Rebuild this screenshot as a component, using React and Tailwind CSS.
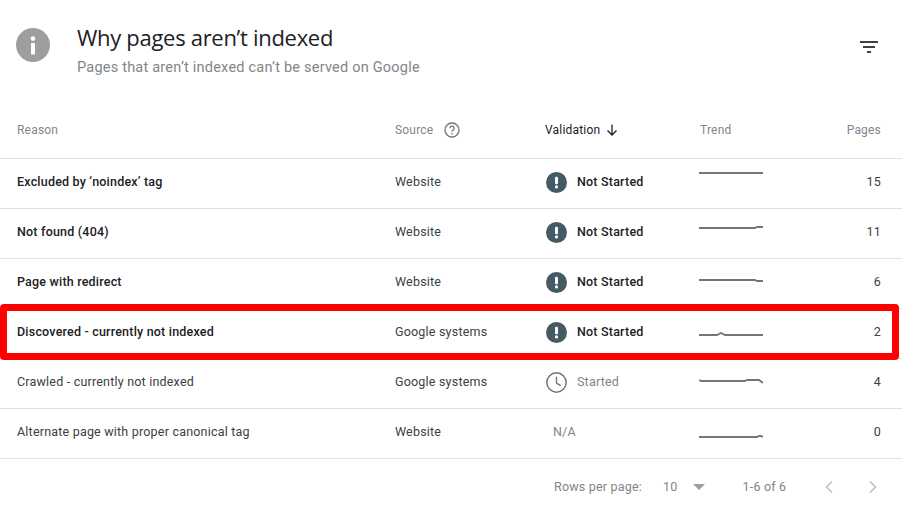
const rows = [
  { reason: "Excluded by ‘noindex’ tag", bold: true, source: "Website", status: "not", pages: "15", top: 11, d: "M0 3H64" },
  { reason: "Not found (404)", bold: true, source: "Website", status: "not", pages: "11", top: 16, d: "M0 3H56L58 2H64" },
  { reason: "Page with redirect", bold: true, source: "Website", status: "not", pages: "6", top: 18, d: "M0 3H56L58 4H64" },
  { reason: "Discovered - currently not indexed", bold: true, source: "Google systems", status: "not", pages: "2", top: 23, d: "M0 3H18L22 1L26 3H64" },
  { reason: "Crawled - currently not indexed", bold: false, source: "Google systems", status: "started", pages: "4", top: 19, d: "M0 2L2 3H46L48 2H60L64 5" },
  { reason: "Alternate page with proper canonical tag", bold: false, source: "Website", status: "na", pages: "0", top: 25, d: "M0 3H58L60 2H62L64 3" },
];

function Spark({ d, top }) {
  return (
    <div className="self-start" style={{ paddingTop: `${top}px` }}>
      <svg width="64" height="6" viewBox="0 0 64 6" fill="none" className="block">
        <path d={d} stroke="#757575" strokeWidth="1.8" />
      </svg>
    </div>
  );
}

function Status({ status }) {
  if (status === "not")
    return (
      <div className="flex items-center gap-[10px] pl-[1px]">
        <svg width="21" height="21" viewBox="0 0 20 20">
          <circle cx="10" cy="10" r="10" fill="#455a64" />
          <rect x="8.6" y="4.6" width="2.8" height="7" rx="1" fill="#fff" />
          <circle cx="10" cy="14.2" r="1.5" fill="#fff" />
        </svg>
        <span className="font-medium text-[#202124]">Not Started</span>
      </div>
    );
  if (status === "started")
    return (
      <div className="flex items-center gap-[10px] pl-[1px]">
        <svg width="21" height="21" viewBox="0 0 20 20" fill="none" stroke="#757575">
          <circle cx="10" cy="10" r="9.2" strokeWidth="1.4" />
          <path d="M10 4.5V10.5L14 13" strokeWidth="1.3" />
        </svg>
        <span className="text-[#80868b]">Started</span>
      </div>
    );
  return <span className="pl-[8px] text-[#80868b]">N/A</span>;
}

const grid = "grid grid-cols-[378px_150px_154px_64px_1fr] pl-[17px] pr-[21px]";

export default function App() {
  return (
    <div className="relative h-[509px] w-[902px] overflow-hidden bg-white font-['Roboto',sans-serif] text-[12.5px] tracking-[0.2px] text-[#3c4043]">
      <header className="flex h-[101px] items-start pl-[16px] pr-[24px] pt-[25px]">
        <div className="mt-[3px] flex h-[34px] w-[34px] items-center justify-center rounded-full bg-[#9e9e9e]">
          <svg width="6" height="19" viewBox="0 0 6 19" fill="#fff">
            <circle cx="3" cy="2.6" r="2.3" />
            <rect x="1" y="7" width="4" height="11.5" rx=".5" />
          </svg>
        </div>
        <div className="ml-[27px] flex-1">
          <h1 className="font-['Open_Sans',sans-serif] text-[22px] leading-[24px] tracking-[-0.3px] text-[#202124]">Why pages aren’t indexed</h1>
          <p className="mt-[9px] text-[14.5px] leading-[20px] tracking-[0.22px] text-[#80868b]">Pages that aren’t indexed can’t be served on Google</p>
        </div>
        <svg width="18" height="12" viewBox="0 0 18 12" fill="#3c4043" className="mt-[16px]">
          <rect width="18" height="2" />
          <rect x="3" y="5" width="12" height="2" />
          <rect x="7" y="10" width="4" height="2" />
        </svg>
      </header>

      <div className={`${grid} h-[58px] items-center border-b border-[#e0e0e0] text-[12px] text-[#80868b]`}>
        <span>Reason</span>
        <span className="flex items-center gap-[11px]">
          Source
          <svg width="16" height="16" viewBox="0 0 16 16" fill="none" stroke="#757575">
            <circle cx="8" cy="8" r="7" strokeWidth="1.3" />
            <path d="M5.9 6.3A2.1 2.1 0 1 1 8.9 8.2C8.2 8.6 8 9 8 9.8" strokeWidth="1.3" />
            <path d="M8 11V12.4" strokeWidth="1.4" />
          </svg>
        </span>
        <span className="flex items-center gap-[6px] text-[#202124]">
          Validation
          <svg width="12" height="12" viewBox="0 0 12 12" fill="none" stroke="#202124" strokeWidth="1.3">
            <path d="M6 .5V11M1.5 6.5L6 11L10.5 6.5" />
          </svg>
        </span>
        <span className="pl-[1px]">Trend</span>
        <span className="text-right">Pages</span>
      </div>

      {rows.map((r) => (
        <div key={r.reason} className={`${grid} h-[50px] items-center border-b border-[#e0e0e0] pb-[2px]`}>
          <span className={r.bold ? "font-medium text-[#202124]" : ""}>{r.reason}</span>
          <span>{r.source}</span>
          <Status status={r.status} />
          <Spark d={r.d} top={r.top} />
          <span className="text-right">{r.pages}</span>
        </div>
      ))}

      <footer className="flex h-[50px] items-center pt-[6px] text-[#80868b]">
        <span className="ml-[554px]">Rows per page:</span>
        <span className="ml-[21px]">10</span>
        <svg width="12" height="6" viewBox="0 0 12 6" fill="#9e9e9e" className="ml-[15px]"><path d="M0 0H12L6 6Z" /></svg>
        <span className="ml-[38px]">1-6 of 6</span>
        <svg width="10" height="14" viewBox="0 0 10 14" fill="none" stroke="#bdbdbd" strokeWidth="1.5" className="ml-[38px] -mt-[1px]"><path d="M8 1.5L2.5 7L8 12.5" /></svg>
        <svg width="10" height="14" viewBox="0 0 10 14" fill="none" stroke="#bdbdbd" strokeWidth="1.5" className="ml-[34px] -mt-[1px]"><path d="M2 1.5L7.5 7L2 12.5" /></svg>
      </footer>

      <div className="pointer-events-none absolute left-0 top-[304px] h-[56px] w-[899px] rounded-[4px] border-[7px] border-[#ff0000]" />
    </div>
  );
}
